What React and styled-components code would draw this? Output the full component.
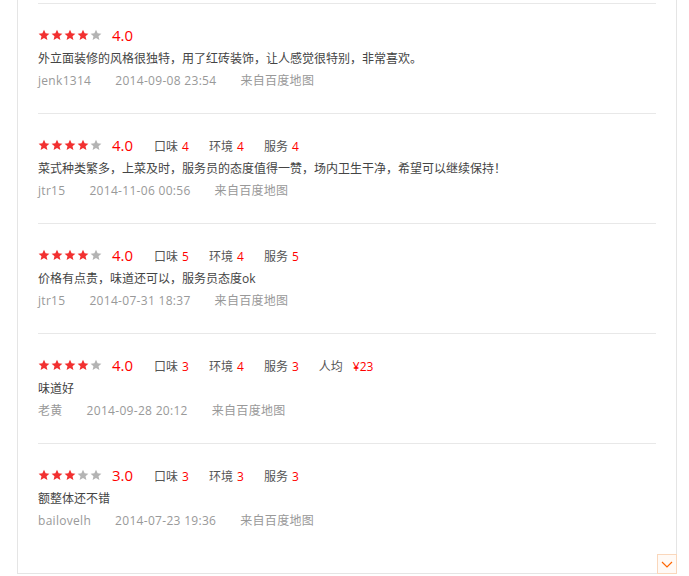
import React from 'react'
import styled, { createGlobalStyle } from 'styled-components'

const GlobalStyle = createGlobalStyle`
  html, body {
    margin: 0;
    padding: 0;
    background: #fff;
  }
  body {
    font-family: "Microsoft YaHei", "Open Sans", "Noto Sans CJK SC", sans-serif;
    font-size: 12px;
  }
`

const reviews = [
    {
        score: 4,
        text: '外立面装修的风格很独特，用了红砖装饰，让人感觉很特别，非常喜欢。',
        user: 'jenk1314',
        time: '2014-09-08 23:54',
        tags: []
    },
    {
        score: 4,
        text: '菜式种类繁多，上菜及时，服务员的态度值得一赞，场内卫生干净，希望可以继续保持！',
        user: 'jtr15',
        time: '2014-11-06 00:56',
        tags: [['口味', '4'], ['环境', '4'], ['服务', '4']]
    },
    {
        score: 4,
        text: '价格有点贵，味道还可以，服务员态度ok',
        user: 'jtr15',
        time: '2014-07-31 18:37',
        tags: [['口味', '5'], ['环境', '4'], ['服务', '5']]
    },
    {
        score: 4,
        text: '味道好',
        user: '老黄',
        time: '2014-09-28 20:12',
        tags: [['口味', '3'], ['环境', '4'], ['服务', '3'], ['人均', '¥23']]
    },
    {
        score: 3,
        text: '额整体还不错',
        user: 'bailovelh',
        time: '2014-07-23 19:36',
        tags: [['口味', '3'], ['环境', '3'], ['服务', '3']]
    }
]

function Star({ on }) {
    return (
        <StarIcon viewBox="0 0 24 24" $on={on}>
            <path d="M12 1.5l3.2 7.1 7.6.7-5.8 5.1 1.8 7.6L12 18l-6.8 4 1.8-7.6L1.2 9.3l7.6-.7z" />
        </StarIcon>
    )
}

export default function App() {
    return (
        <>
            <GlobalStyle />
            <Panel>
                {reviews.map((r, i) => (
                    <Item key={i}>
                        <RateRow>
                            <Stars>
                                {[1, 2, 3, 4, 5].map(n => <Star key={n} on={n <= r.score} />)}
                            </Stars>
                            <Score>{r.score.toFixed(1)}</Score>
                            {r.tags.length > 0 && (
                                <Tags>
                                    {r.tags.map(([label, val]) => (
                                        <Tag key={label}>
                                            {label}
                                            <TagValue $wide={label === '人均'}>{val}</TagValue>
                                        </Tag>
                                    ))}
                                </Tags>
                            )}
                        </RateRow>
                        <Comment>{r.text}</Comment>
                        <Meta>
                            <span>{r.user}</span>
                            <span>{r.time}</span>
                            <span>来自百度地图</span>
                        </Meta>
                    </Item>
                ))}
                <MoreButton aria-label="展开">
                    <svg width="12" height="7" viewBox="0 0 12 7">
                        <path d="M1 1l5 5 5-5" fill="none" stroke="#f60" strokeWidth="1.2" />
                    </svg>
                </MoreButton>
            </Panel>
        </>
    )
}

const Panel = styled.div`
    position: relative;
    width: 618px;
    margin-left: 17px;
    padding: 3px 20px 20px;
    border: 1px solid #e5e5e5;
    border-top: none;
`

const Item = styled.div`
    height: 88px;
    padding-top: 21px;
    border-top: 1px solid #e8e8e8;
`

const RateRow = styled.div`
    display: flex;
    align-items: center;
    height: 20px;
`

const Stars = styled.div`
    display: flex;
    gap: 1px;
`

const StarIcon = styled.svg`
    width: 12px;
    height: 12px;
    fill: ${p => (p.$on ? '#f23030' : '#b4b4b4')};
`

const Score = styled.span`
    margin-left: 10px;
    font-size: 15px;
    color: #f00;
    line-height: 20px;
`

const Tags = styled.div`
    display: flex;
    gap: 20px;
    margin-left: 21px;
    margin-top: 2px;
`

const Tag = styled.span`
    color: #555;
    font-size: 12px;
`

const TagValue = styled.span`
    margin-left: ${p => (p.$wide ? '10px' : '4px')};
    color: #f00;
`

const Comment = styled.div`
    margin-top: 3px;
    line-height: 22px;
    color: #444;
`

const Meta = styled.div`
    display: flex;
    gap: 24px;
    line-height: 22px;
    letter-spacing: 0.3px;
    color: #999;
`

const MoreButton = styled.button`
    position: absolute;
    right: -1px;
    bottom: -1px;
    width: 20px;
    height: 20px;
    padding: 0;
    display: flex;
    align-items: center;
    justify-content: center;
    border: 1px solid #fad7bb;
    background: #fffaf6;
    cursor: pointer;
`
